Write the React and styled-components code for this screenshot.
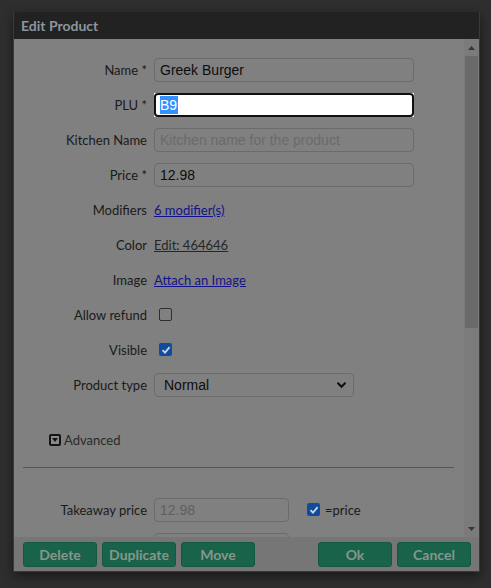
import React from 'react'
import styled, { createGlobalStyle } from 'styled-components'

const GlobalStyle = createGlobalStyle`
  html, body {
    margin: 0;
    padding: 0;
    background: #2e2e2e;
  }
  * { box-sizing: border-box; }
`

const Page = styled.div`
  width: 491px;
  height: 588px;
  padding: 12px 0 0 13px;
`

const Dialog = styled.div`
  width: 467px;
  height: 560px;
  display: flex;
  flex-direction: column;
  box-shadow: 0 4px 10px rgba(0, 0, 0, 0.45);
  border: 1px solid #3a3a3a;
  border-top: none;
`

const TitleBar = styled.div`
  height: 27px;
  flex: none;
  background: #222222;
  color: #8e959c;
  font-family: Lato, 'Liberation Sans', sans-serif;
  font-weight: 700;
  font-size: 14px;
  line-height: 27px;
  padding-left: 7px;
`

const Body = styled.div`
  flex: 1;
  min-height: 0;
  display: flex;
  background: #808080;
`

const ScrollView = styled.div`
  flex: 1;
  min-width: 0;
  overflow: hidden;
`

const Scrollbar = styled.div`
  width: 15px;
  flex: none;
  display: flex;
  flex-direction: column;
  background: #7b7b7b;
`

const ScrollButton = styled.div`
  height: 17px;
  flex: none;
  display: flex;
  justify-content: center;
  align-items: center;
`

const Track = styled.div`
  flex: 1;
  padding: 0 1px;
`

const Thumb = styled.div`
  height: 272px;
  background: #6a6a6a;
`

const Content = styled.div`
  padding-top: 13px;
  font-family: Lato, 'Liberation Sans', sans-serif;
  font-size: 13px;
  color: #1a1a1a;
`

const Row = styled.div`
  height: 35px;
  display: grid;
  grid-template-columns: 133px 1fr;
  column-gap: 7px;
  align-items: center;
`

const Label = styled.div`
  text-align: right;
  white-space: nowrap;
`

const Field = styled.div`
  display: flex;
  align-items: center;
`

const TextBox = styled.div`
  width: ${(p) => p.$w || 260}px;
  height: 24px;
  border: 1px solid #6b6b6b;
  border-radius: 4px;
  padding: 0 5px;
  display: flex;
  align-items: center;
  font-family: 'Liberation Sans', Arial, sans-serif;
  font-size: 14px;
  color: ${(p) => (p.$muted ? '#5f5f5f' : '#0d0d0d')};
`

const FocusFrame = styled.div`
  width: 260px;
  height: 24px;
  background: #ffffff;
`

const FocusInput = styled.div`
  height: 100%;
  border: 2px solid #111111;
  border-radius: 4px;
  padding: 0 4px;
  display: flex;
  align-items: center;
  font-family: 'Liberation Sans', Arial, sans-serif;
  font-size: 14px;
`

const Selected = styled.span`
  background: #3390ff;
  color: #ffffff;
  line-height: 18px;
  padding-right: 1px;
`

const Placeholder = styled.span`
  color: #6a6a6a;
`

const Link = styled.a`
  color: ${(p) => p.$color || '#12128c'};
  text-decoration: underline;
  cursor: pointer;
`

const Check = styled.span`
  width: 13px;
  height: 13px;
  margin-left: ${(p) => p.$ml ?? 5}px;
  border-radius: 2px;
  display: inline-flex;
  align-items: center;
  justify-content: center;
  background: ${(p) => (p.$on ? '#0f4c9c' : 'transparent')};
  border: ${(p) => (p.$on ? 'none' : '1px solid #2e2e2e')};
`

const CheckText = styled.span`
  margin-left: 5px;
  font-size: 13px;
`

const Select = styled.div`
  width: 200px;
  height: 24px;
  border: 1px solid #6b6b6b;
  border-radius: 4px;
  padding: 0 6px 0 9px;
  display: flex;
  align-items: center;
  justify-content: space-between;
  font-family: 'Liberation Sans', Arial, sans-serif;
  font-size: 14px;
  color: #0d0d0d;
`

const Advanced = styled.div`
  margin: 30px 0 0 35px;
  height: 16px;
  display: flex;
  align-items: center;
  gap: 3px;
  color: #2a2a2a;
`

const ToggleIcon = styled.span`
  width: 12px;
  height: 12px;
  border: 2px solid #141414;
  border-radius: 2px;
  background: #8a8a8a;
  display: inline-flex;
  align-items: center;
  justify-content: center;
`

const Divider = styled.hr`
  margin: 19px 10px 24px 9px;
  border: none;
  border-top: 1px solid #555555;
  height: 0;
`

const Footer = styled.div`
  height: 34px;
  flex: none;
  background: #767676;
  display: flex;
  gap: 5px;
  padding: 5px 8px 0 9px;
`

const Button = styled.button`
  width: 74px;
  height: 25px;
  margin-left: ${(p) => (p.$push ? 'auto' : '0')};
  background: #19634a;
  border: 1px solid #155840;
  border-radius: 3px;
  color: #86978d;
  font-family: Lato, 'Liberation Sans', sans-serif;
  font-weight: 700;
  font-size: 14px;
  line-height: 24px;
  padding: 0;
`

const Tick = () => (
  <svg width="10" height="10" viewBox="0 0 10 10">
    <polyline points="1.5,5.2 4,7.6 8.6,2.2" fill="none" stroke="#cfd5dc" strokeWidth="1.8" />
  </svg>
)

const Chevron = () => (
  <svg width="11" height="8" viewBox="0 0 11 8">
    <polyline points="1.5,1.8 5.5,5.8 9.5,1.8" fill="none" stroke="#0d0d0d" strokeWidth="2" />
  </svg>
)

const Arrow = ({ up }) => (
  <svg width="7" height="4" viewBox="0 0 7 4">
    <polygon points={up ? '0,4 7,4 3.5,0' : '0,0 7,0 3.5,4'} fill="#363636" />
  </svg>
)

// price row; the second one is scrolled below the fold, only its top edge shows
const PriceRow = ({ label, value, check }) => (
  <Row>
    <Label>{label}</Label>
    <Field>
      <TextBox $w={135} $muted>{value}</TextBox>
      <Check $on $ml={18}><Tick /></Check>
      {check && <CheckText>{check}</CheckText>}
    </Field>
  </Row>
)

export default function App() {
  return (
    <Page>
      <GlobalStyle />
      <Dialog>
        <TitleBar>Edit Product</TitleBar>
        <Body>
          <ScrollView>
            <Content>
              <Row>
                <Label>Name *</Label>
                <Field><TextBox>Greek Burger</TextBox></Field>
              </Row>
              <Row>
                <Label>PLU *</Label>
                <Field>
                  <FocusFrame>
                    <FocusInput><Selected>B9</Selected></FocusInput>
                  </FocusFrame>
                </Field>
              </Row>
              <Row>
                <Label>Kitchen Name</Label>
                <Field><TextBox><Placeholder>Kitchen name for the product</Placeholder></TextBox></Field>
              </Row>
              <Row>
                <Label>Price *</Label>
                <Field><TextBox>12.98</TextBox></Field>
              </Row>
              <Row>
                <Label>Modifiers</Label>
                <Field><Link>6 modifier(s)</Link></Field>
              </Row>
              <Row>
                <Label>Color</Label>
                <Field><Link $color="#262626">Edit: 464646</Link></Field>
              </Row>
              <Row>
                <Label>Image</Label>
                <Field><Link>Attach an Image</Link></Field>
              </Row>
              <Row>
                <Label>Allow refund</Label>
                <Field><Check /></Field>
              </Row>
              <Row>
                <Label>Visible</Label>
                <Field><Check $on><Tick /></Check></Field>
              </Row>
              <Row>
                <Label>Product type</Label>
                <Field>
                  <Select>
                    <span>Normal</span>
                    <Chevron />
                  </Select>
                </Field>
              </Row>
              <Advanced>
                <ToggleIcon>
                  <svg width="6" height="4" viewBox="0 0 6 4"><polygon points="0,0 6,0 3,4" fill="#141414" /></svg>
                </ToggleIcon>
                Advanced
              </Advanced>
              <Divider />
              <PriceRow label="Takeaway price" value="12.98" check="=price" />
              <PriceRow />
            </Content>
          </ScrollView>
          <Scrollbar>
            <ScrollButton><Arrow up /></ScrollButton>
            <Track><Thumb /></Track>
            <ScrollButton><Arrow /></ScrollButton>
          </Scrollbar>
        </Body>
        <Footer>
          <Button>Delete</Button>
          <Button>Duplicate</Button>
          <Button>Move</Button>
          <Button $push>Ok</Button>
          <Button>Cancel</Button>
        </Footer>
      </Dialog>
    </Page>
  )
}
